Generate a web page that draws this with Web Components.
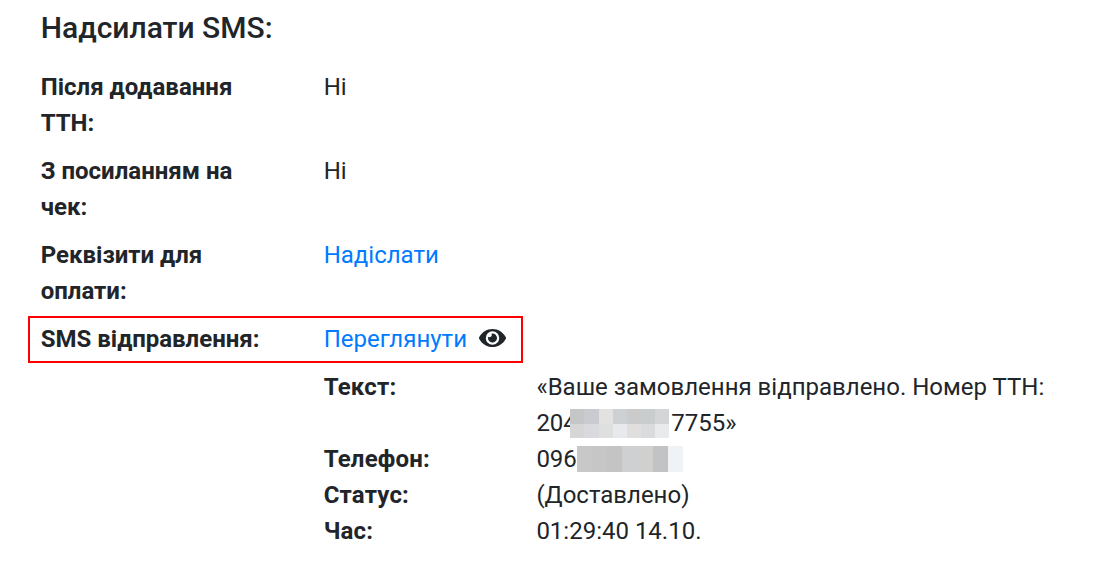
<!DOCTYPE html>
<html><head><meta charset="utf-8"><style>
html,body{margin:0;padding:0;background:#fff}
body{font-family:Roboto,sans-serif;color:#212529;width:1107px;height:564px;overflow:hidden}
</style></head><body>
<sms-view></sms-view>
<template id="t-row"><style>
:host{display:grid;grid-template-columns:283px 1fr;font-size:24px;line-height:36px;position:relative}
.k{font-weight:700;width:240px}
.hl{display:none;position:absolute;left:-13px;top:-5px;width:491px;height:43px;border:2px solid #f00}
:host([marked]) .hl{display:block}
</style><div class="k"><slot name="k"></slot></div><div class="v"><slot></slot></div><div class="hl"></div></template>
<template id="t-sub"><style>
:host{display:grid;grid-template-columns:212.7px 520px;font-size:24px;line-height:36px}
.k{font-weight:700;letter-spacing:.2px}
</style><div class="k"><slot name="k"></slot></div><div><slot></slot></div></template>
<template id="t-blur"><style>
:host{display:inline-block;position:relative;height:36px;vertical-align:top}
.g{position:absolute;display:grid;grid-auto-flow:column}
i{display:block}
</style><div class="g"></div></template>
<template id="t-main"><style>
:host{display:block;padding:8px 0 0 40.7px}
h2{margin:0 0 21px;font-size:30px;font-weight:500;line-height:40px}
.rows{display:flex;flex-direction:column;gap:12px}
.sub{margin:0 0 0 283px;padding-top:12px}
svg{vertical-align:-3px;margin-left:12px}
a{color:#007bff;text-decoration:none}
.nw{white-space:nowrap}
</style>
<h2>Надсилати SMS:</h2>
<div class="rows">
<sms-row><span slot="k">Після додавання ТТН:</span>Ні</sms-row>
<sms-row><span slot="k">З посиланням на чек:</span>Ні</sms-row>
<sms-row><span slot="k">Реквізити для оплати:</span><a href="#">Надіслати</a></sms-row>
<sms-row marked><span slot="k">SMS відправлення:</span><a href="#">Переглянути</a><svg width="27" height="24" viewBox="0 0 576 512"><path fill="#212529" d="M572.5 241.4C518.3 135.6 410.9 64 288 64S57.7 135.6 3.5 241.4a32.4 32.4 0 0 0 0 29.2C57.7 376.4 165.1 448 288 448s230.3-71.6 284.5-177.4a32.4 32.4 0 0 0 0-29.2zM288 400a144 144 0 1 1 144-144 143.9 143.9 0 0 1-144 144zm0-240a95.3 95.3 0 0 0-25.3 3.8 47.9 47.9 0 0 1-66.9 66.9A95.8 95.8 0 1 0 288 160z"/></svg></sms-row>
</div>
<div class="sub">
<sms-sub><span slot="k">Текст:</span>«Ваше замовлення відправлено. Номер ТТН: <span class="nw">204<sms-blur style="width:94.5px" data-x="-6.5" data-y="4" data-w="14.15" data-h="14.5" data-c="#c5c7c6,#c9cbd0,#e3e2e1,#ced1d4,#cbcbcb,#c9cdce,#d3d5d7;#d6d6d6,#dadade,#dde0df,#e8e9ed,#e0dfdd,#d9dbdc,#e9eaec"></sms-blur>7755»</span></sms-sub>
<sms-sub><span slot="k">Телефон:</span>096<sms-blur data-x="0" data-y="5" data-w="15.15" data-h="26" data-c="#c8c8c8,#c6c6c6,#c4c4c4,#ced0d2,#d0d0ce,#c2c3c4,#eff3f6"></sms-blur></sms-sub>
<sms-sub><span slot="k">Статус:</span>(Доставлено)</sms-sub>
<sms-sub><span slot="k">Час:</span>01:29:40 14.10.</sms-sub>
</div></template>
<script>
function def(n,t,init){customElements.define(n,class extends HTMLElement{constructor(){super();this.attachShadow({mode:'open'}).appendChild(document.getElementById(t).content.cloneNode(true))}
connectedCallback(){if(init)init(this)}})}
def('sms-row','t-row');def('sms-sub','t-sub');
def('sms-blur','t-blur',function(el){
 var g=el.shadowRoot.querySelector('.g'),d=el.dataset;if(g.firstChild)return;
 g.style.left=d.x+'px';g.style.top=d.y+'px';
 var rows=d.c.split(';');
 g.style.gridTemplateRows='repeat('+rows.length+','+d.h+'px)';
 g.style.gridTemplateColumns='repeat(7,'+d.w+'px)';
 rows.forEach(function(r,ri){r.split(',').forEach(function(c,ci){var i=document.createElement('i');i.style.background=c;i.style.gridRow=ri+1;i.style.gridColumn=ci+1;g.appendChild(i)})});
});
def('sms-view','t-main');
</script>
</body></html>
